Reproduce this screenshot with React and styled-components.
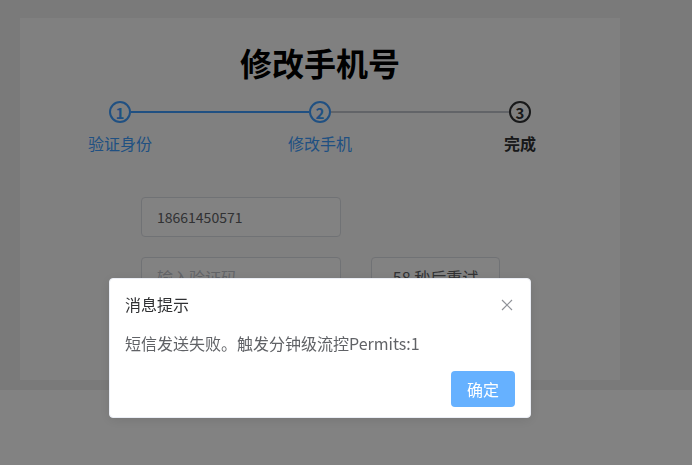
import React from 'react';
import styled, { createGlobalStyle } from 'styled-components';

const GlobalStyle = createGlobalStyle`
  html, body {
    margin: 0;
    padding: 0;
    background: #efefef;
    font-family: "Noto Sans CJK SC", "Noto Sans", sans-serif;
  }
  * {
    box-sizing: border-box;
  }
`;

const Page = styled.div`
  min-height: 465px;
  display: flex;
  flex-direction: column;
  padding-top: 18px;
`;

const Card = styled.div`
  margin-left: 20px;
  width: 600px;
  height: 362px;
  background: #fbfbfb;
  padding-top: 28px;
  display: flex;
  flex-direction: column;
`;

const Footer = styled.div`
  margin-top: 10px;
  flex: 1;
  background: #fff;
`;

const Title = styled.h1`
  margin: 0;
  font-size: 32px;
  line-height: 32px;
  font-weight: 700;
  color: #000;
  text-align: center;
`;

const Steps = styled.div`
  margin-top: 23px;
  display: grid;
  grid-template-columns: repeat(3, 200px);
`;

const Step = styled.div`
  position: relative;
  display: flex;
  flex-direction: column;
  align-items: center;
  color: ${(p) => (p.$done ? '#409eff' : '#303133')};
`;

const Connector = styled.div`
  position: absolute;
  top: 10px;
  left: 111px;
  width: 178px;
  height: 2px;
  background: ${(p) => (p.$done ? '#409eff' : '#c0c4cc')};
`;

const Circle = styled.div`
  width: 22px;
  height: 22px;
  border-radius: 50%;
  border: 2px solid currentColor;
  display: flex;
  align-items: center;
  justify-content: center;
  font-size: 15px;
  font-weight: 700;
  line-height: 1;
`;

const StepLabel = styled.div`
  margin-top: 9px;
  font-size: 16px;
  line-height: 22px;
  font-weight: ${(p) => (p.$active ? 700 : 400)};
`;

const Form = styled.div`
  margin-top: 43px;
  padding-left: 121px;
  display: flex;
  flex-direction: column;
  gap: 20px;
`;

const Row = styled.div`
  display: flex;
  gap: 30px;
`;

const Input = styled.div`
  width: 200px;
  height: 40px;
  border: 1px solid #dcdfe6;
  border-radius: 4px;
  background: #fff;
  padding: 0 15px;
  display: flex;
  align-items: center;
  font-size: ${(p) => (p.$placeholder ? '16px' : '14px')};
  color: ${(p) => (p.$placeholder ? '#c0c4cc' : '#606266')};
`;

const CodeButton = styled.div`
  width: 129px;
  height: 40px;
  border: 1px solid #dcdfe6;
  border-radius: 4px;
  background: #fff;
  display: flex;
  align-items: center;
  justify-content: center;
  font-size: 16px;
  color: #606266;
`;

const Mask = styled.div`
  position: fixed;
  inset: 0;
  background: rgba(0, 0, 0, 0.49);
`;

const MessageBox = styled.div`
  position: fixed;
  left: 109px;
  top: 278px;
  width: 422px;
  background: #fff;
  border: 1px solid #ebeef5;
  border-radius: 4px;
  box-shadow: 0 2px 12px rgba(0, 0, 0, 0.1);
  padding-bottom: 10px;
`;

const BoxHeader = styled.div`
  position: relative;
  padding: 14px 15px 10px;
  font-size: 16px;
  line-height: 22px;
  color: #303133;
`;

const CloseBtn = styled.div`
  position: absolute;
  top: 20px;
  right: 17px;
  width: 12px;
  height: 12px;
  display: flex;
`;

const BoxContent = styled.div`
  padding: 8px 15px 12px;
  font-size: 16px;
  line-height: 21px;
  color: #606266;
`;

const BoxButtons = styled.div`
  padding: 5px 15px 0;
  display: flex;
  justify-content: flex-end;
`;

const Confirm = styled.div`
  width: 64px;
  height: 36px;
  border-radius: 4px;
  background: #66b1ff;
  color: #fff;
  font-size: 16px;
  display: flex;
  align-items: center;
  justify-content: center;
`;

const steps = [
  { n: 1, label: '验证身份', done: true },
  { n: 2, label: '修改手机', done: true },
  { n: 3, label: '完成', done: false, active: true },
];

export default function App() {
  return (
    <>
      <GlobalStyle />
      <Page>
        <Card>
          <Title>修改手机号</Title>
          <Steps>
            {steps.map((s, i) => (
              <Step key={s.n} $done={s.done}>
                {i < steps.length - 1 && <Connector $done={steps[i + 1].done} />}
                <Circle>{s.n}</Circle>
                <StepLabel $active={s.active}>{s.label}</StepLabel>
              </Step>
            ))}
          </Steps>
          <Form>
            <Row>
              <Input>18661450571</Input>
            </Row>
            <Row>
              <Input $placeholder>输入验证码</Input>
              <CodeButton>58 秒后重试</CodeButton>
            </Row>
          </Form>
        </Card>
        <Footer />
      </Page>
      <Mask />
      <MessageBox>
        <BoxHeader>
          消息提示
          <CloseBtn>
            <svg width="12" height="12" viewBox="0 0 12 12">
              <path d="M1 1L11 11M11 1L1 11" stroke="#909399" strokeWidth="1.2" />
            </svg>
          </CloseBtn>
        </BoxHeader>
        <BoxContent>短信发送失败。触发分钟级流控Permits:1</BoxContent>
        <BoxButtons>
          <Confirm>确定</Confirm>
        </BoxButtons>
      </MessageBox>
    </>
  );
}
